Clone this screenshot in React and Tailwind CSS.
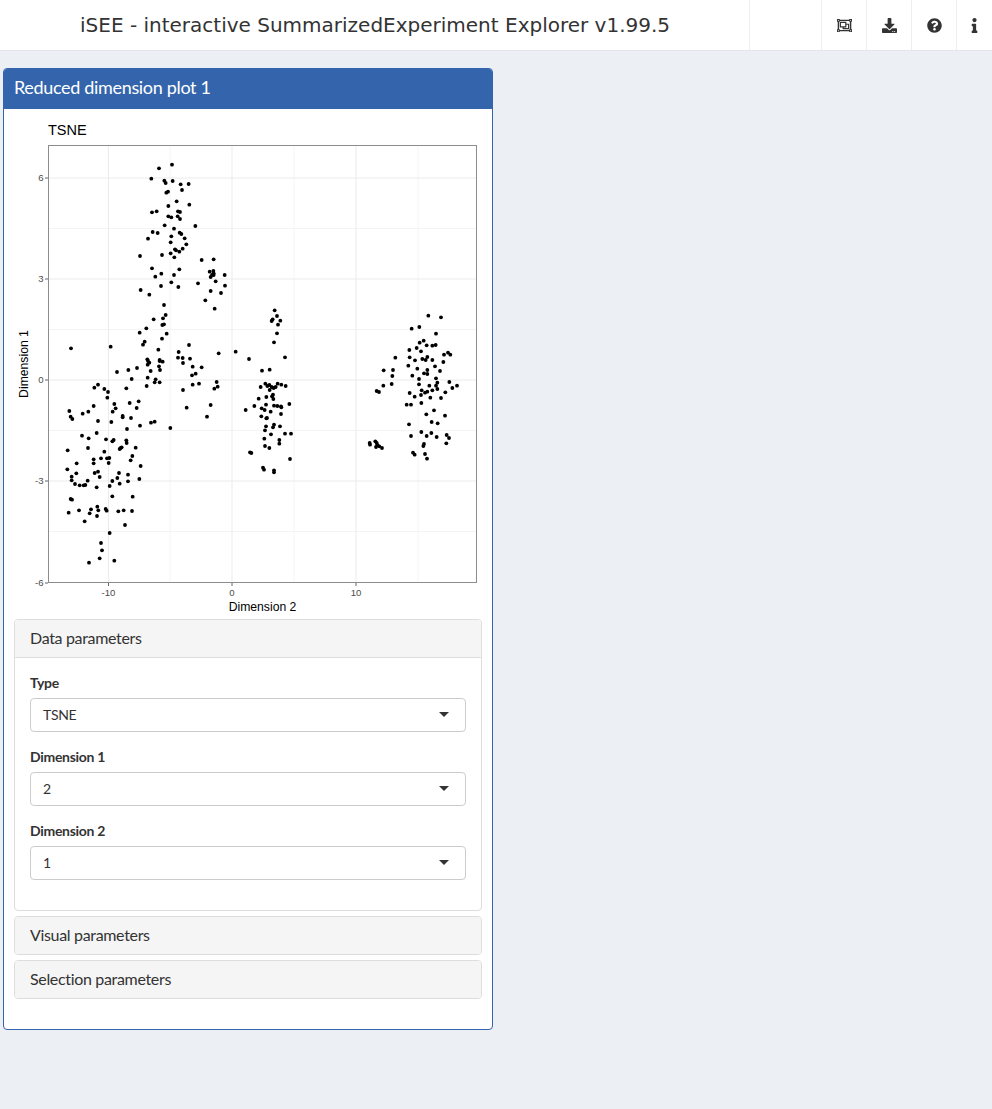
import React from "react";
import { FaRegObjectGroup, FaDownload, FaQuestionCircle, FaInfo } from "react-icons/fa";

const a = "333,85;372,74;310,116;349,122;353,129;374,123;398,133;422,132;402,150;355,158;360,155;386,184;424,194;361,198;312,217;326,214;390,214;396,216;361,229;370,232;389,229;396,237;350,256;442,258;378,266;314,276;329,279;395,278;400,282;370,289;300,296;410,295;368,307;415,313;381,328;384,331;404,326;394,335;368,340;342,345;276,348;379,352;461,360;497,358;312,385;394,388;340,401;322,410;378,405;485,395;496,393;497,400;492,405;497,405;488,411;530,405;503,424;370,427;450,430;339,438;391,441;531,437;278,450;488,453;304,464;472,481;348,495;500,506;353,525;345,535;317,538;343,555;348,553;295,565;275,578;356,581;342,596;290,605;285,614;423,615;331,629;69,625;188,620;392,636;512,640;390,653;404,654;426,656;298,658;335,660";
const b = "300,3;304,8;299,14;335,3;344,5;405,9;434,20;461,22;333,19;336,30;267,24;241,30;207,36;308,33;432,46;443,41;299,53;251,57;323,58;320,67;335,67;434,74;453,71;506,66;509,80;499,86;296,78;235,85;405,90;150,74;139,83;169,87;180,96;178,113;199,132;245,129;272,124;137,138;203,145;266,144;194,155;64,153;121,155;104,161;68,170;73,177;224,168;224,172;249,174;150,183;190,186;320,185;309,188;276,197;367,204;237,207;488,135;416,143;477,170;146,219;102,227;122,235;174,238;197,240;193,244;235,241;236,249;120,264;263,263;221,262;218,264;215,267;59,271;169,275;253,288;159,295;177,295;184,294;137,298;248,301;137,310;182,309;86,310;278,318;58,328;150,335;140,339;85,340;213,339;240,344;155,351;71,350;208,354;71,361;119,362;193,363;240,364;215,371;274,357;81,372;95,376;107,376;112,375;185,378;146,382;193,409;254,410;68,417;72,419;148,440;129,448;93,451;173,447;176,452;151,451;211,454;227,451;252,453;62,458;125,460;147,468;110,484;231,495;185,519;159,549;162,571;155,595;199,602;123,608";
const c = "3,9;164,61;171,78;158,88;155,93;181,92;174,104;171,130;162,157;47,185;87,207;195,202;126,242;149,239;136,281;142,288;148,285;122,291;173,281;184,284;197,288;155,291;161,294;167,291;149,300;159,314;156,319;139,321;160,327;116,326;208,342;103,348;138,344;162,347;172,348;183,349;184,352;125,355;134,360;77,360;152,365;183,372;124,379;139,385;141,384;138,409;162,404;159,412;180,409;135,421;153,433;195,431;213,431;133,446;178,450;178,461;135,468;148,474;90,487;94,489;210,507;129,533;132,539;162,541;162,547;625,77;663,82;575,116;598,111;648,131;611,152;599,158;620,166;637,167;647,165;590,174;568,180;603,184;672,194;684,188;691,194;526,203;569,202;585,211;607,207;617,210;622,201;637,210;670,216;565,227;645,229;592,236;622,240;660,243;491,241;519,240;612,250;622,252;577,257;517,258;597,267;648,265;652,278;688,276;515,282;490,287;597,283;628,287;648,287;711,287;697,294;652,297;470,303;477,306;605,301;637,301;622,305;615,308;569,309;676,307;603,315;584,320;631,323;663,324;560,344;573,344;604,339;642,361;619,373;675,377;635,396;653,400;567,403;604,426;634,429;573,438;620,438;650,441;680,435;687,444;679,460;612,462;610,468;466,454;470,459;449,459;450,464;472,465;468,471;478,469;486,474;579,488;584,494;615,492;621,506";

const parse = (s, ox, oy) =>
  s.split(";").map((p) => {
    const [x, y] = p.split(",").map(Number);
    return [x / 3 + ox, y / 3 + oy];
  });
const points = [...parse(a, 48, 140), ...parse(b, 48, 360), ...parse(c, 220, 290)];

const majorX = [108.5, 232, 356];
const minorX = [170, 294, 418];
const majorY = [178, 279, 380, 481];
const minorY = [228.5, 329.5, 430.5, 531.5];

function Plot() {
  const axis = { fontFamily: '"Liberation Sans", Arial, sans-serif' };
  return (
    <svg viewBox="4 109 488 510" width="488" height="510" className="block" style={axis}>
      <text x="48" y="135" fontSize="14.5" fill="#000">TSNE</text>
      {minorX.map((x) => <line key={x} x1={x} x2={x} y1="146" y2="582" stroke="#f4f4f4" strokeWidth="1" />)}
      {minorY.map((y) => <line key={y} y1={y} y2={y} x1="49" x2="476" stroke="#f4f4f4" strokeWidth="1" />)}
      {majorX.map((x) => <line key={x} x1={x} x2={x} y1="146" y2="582" stroke="#ebebeb" strokeWidth="1" />)}
      {majorY.map((y) => <line key={y} y1={y} y2={y} x1="49" x2="476" stroke="#ebebeb" strokeWidth="1" />)}
      {points.map(([x, y], i) => <circle key={i} cx={x} cy={y} r="1.9" fill="#000" />)}
      <rect x="48.5" y="145.5" width="428" height="437" fill="none" stroke="#8c8c8c" strokeWidth="1" />
      {[[178, "6"], [279, "3"], [380, "0"], [481, "-3"], [583, "-6"]].map(([y, t]) => (
        <g key={t}>
          <line x1="45" x2="48" y1={y} y2={y} stroke="#666" />
          <text x="43.5" y={y + 3.4} fontSize="9.6" textAnchor="end" fill="#4d4d4d">{t}</text>
        </g>
      ))}
      {[[108.5, "-10"], [232, "0"], [356, "10"]].map(([x, t]) => (
        <g key={t}>
          <line x1={x} x2={x} y1="583" y2="586" stroke="#666" />
          <text x={x} y="596" fontSize="9.6" textAnchor="middle" fill="#4d4d4d">{t}</text>
        </g>
      ))}
      <text x="262.5" y="611" fontSize="12.2" textAnchor="middle" fill="#000">Dimension 2</text>
      <text transform="translate(28 364) rotate(-90)" fontSize="12.2" textAnchor="middle" fill="#000">Dimension 1</text>
    </svg>
  );
}

function Select({ label, value }) {
  return (
    <div className="mb-[15px]">
      <div className="h-[21px] mb-[4px] text-[14px] leading-[19px] font-bold text-[#333] tracking-[-0.3px]">{label}</div>
      <div className="h-[34px] flex items-center justify-between rounded-[4px] border border-[#cccccc] bg-white pl-[12px] pr-[16px] text-[14px] text-[#333]">
        <span className="tracking-[-0.3px] pb-[2px]">{value}</span>
        <span className="w-0 h-0 border-x-[5px] border-x-transparent border-t-[5px] border-t-[#333] mb-[2px]" />
      </div>
    </div>
  );
}

function Collapse({ title, children, className = "" }) {
  return (
    <div className={"mx-[10px] rounded-[4px] border border-[#dddddd] bg-white " + className}>
      <div className="h-[37px] flex items-center px-[15px] pb-[2px] bg-[#f5f5f5] text-[16px] tracking-[-0.33px] text-[#333] rounded-[3px]">{title}</div>
      {children}
    </div>
  );
}

export default function App() {
  return (
    <div className="min-h-[1109px] bg-[#ecf0f5] font-['Lato',sans-serif]">
      <header className="h-[51px] bg-white border-b border-[#e3e6ea] flex items-stretch">
        <div className="w-[749px] pl-[80px] flex items-center text-[20px] text-[#333] font-['DejaVu_Sans',sans-serif]">
          iSEE - interactive SummarizedExperiment Explorer v1.99.5
        </div>
        <div className="w-[72px] border-l border-[#eeeeee]" />
        {[FaRegObjectGroup, FaDownload, FaQuestionCircle, FaInfo].map((Icon, i) => (
          <div key={i} className={(i === 3 ? "w-[36px] " : "w-[45px] ") + "border-l border-[#eeeeee] flex items-center justify-center text-[#333] text-[15px]"}>
            <Icon />
          </div>
        ))}
      </header>
      <main className="pt-[17px] pl-[3px]">
        <section className="w-[490px] h-[962px] rounded-[4px] border border-[#3465ac] bg-white overflow-hidden">
          <div className="-mt-[1px] h-[41px] bg-[#3465ac] flex items-center pl-[10px] pb-[2px] text-[18px] tracking-[-0.33px] text-white">
            Reduced dimension plot 1
          </div>
          <Plot />
          <Collapse title="Data parameters">
            <div className="border-t border-[#dddddd] px-[15px] pt-[15px] h-[253px]">
              <Select label="Type" value="TSNE" />
              <Select label="Dimension 1" value="2" />
              <Select label="Dimension 2" value="1" />
            </div>
          </Collapse>
          <Collapse title="Visual parameters" className="mt-[5px]" />
          <Collapse title="Selection parameters" className="mt-[5px]" />
        </section>
      </main>
    </div>
  );
}
